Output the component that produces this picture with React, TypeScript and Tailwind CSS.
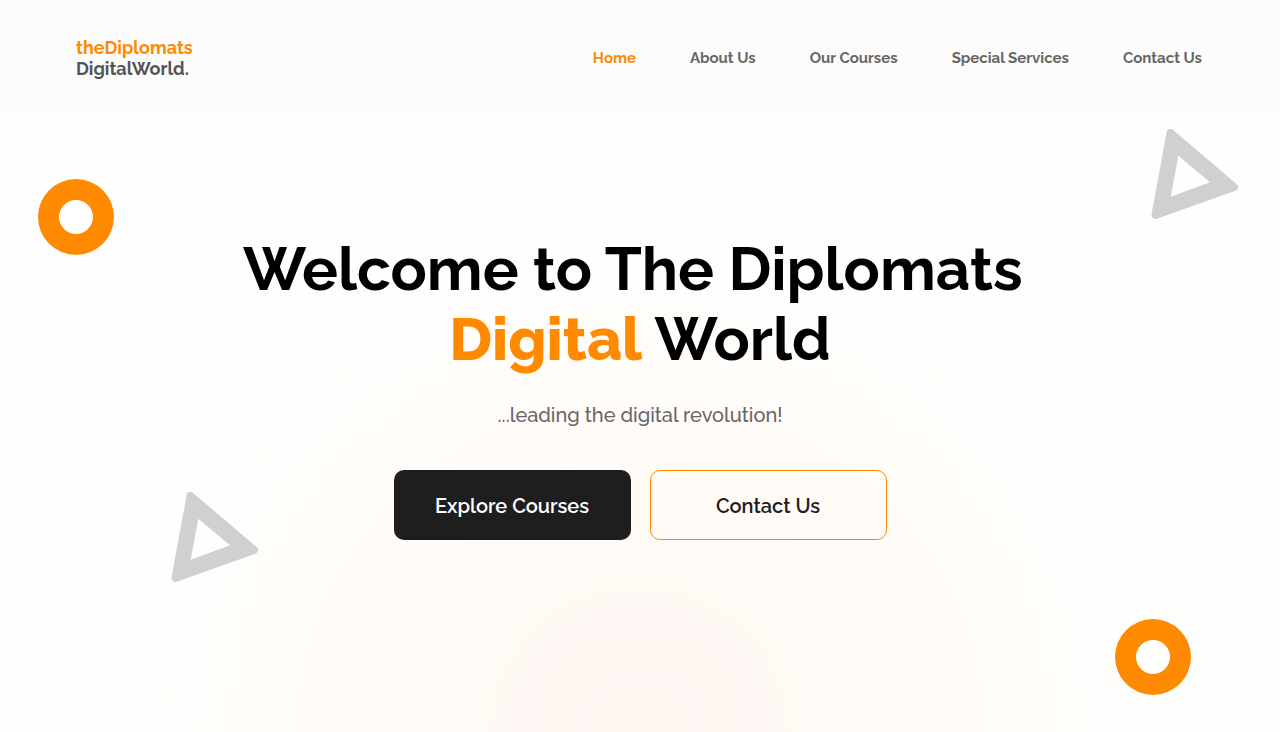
const navItems = [
  { label: "Home", href: "#home" },
  { label: "About Us", href: "#about" },
  { label: "Our Courses", href: "#courses" },
  { label: "Special Services", href: "#services" },
  { label: "Contact Us", href: "#contact" },
];

function Triangle({ className }: { className: string }) {
  return (
    <svg aria-hidden="true" width="90" height="92" viewBox="0 0 90 92" className={className}>
      <path
        d="M20.5 5 84 59 5.5 87ZM28.3 27.7 20.7 68.7 60 54.3Z"
        fill="#d0d0d0"
        fillRule="evenodd"
      />
      <path d="M20.5 5 84 59 5.5 87Z" fill="none" stroke="#d0d0d0" strokeWidth="8" strokeLinejoin="round" />
    </svg>
  );
}

function Ring({ className }: { className: string }) {
  return (
    <svg aria-hidden="true" width="76" height="76" viewBox="0 0 76 76" className={className}>
      <circle cx="38" cy="38" r="38" fill="#ff8a00" />
      <circle cx="38" cy="38" r="17" fill="#fff" />
    </svg>
  );
}

export default function App() {
  return (
    <div className="flex min-h-screen flex-col bg-white font-['Raleway','Lato',sans-serif]">
      <header className="flex h-28 items-center justify-between bg-[#fcfcfc] pr-[78px] pl-[76px]">
        <a href="#home" className="flex flex-col pt-1 text-[18px] leading-[21px] font-bold">
          <span className="text-[#ff8a00]">theDiplomats</span>
          <span className="text-[#555]">DigitalWorld.</span>
        </a>
        <nav aria-label="Main" className="flex gap-[54px] pt-1 text-[15px] leading-6 font-bold text-[#666]">
          {navItems.map((item, i) => (
            <a key={item.label} href={item.href} className={i === 0 ? "text-[#ff8a00]" : ""}>
              {item.label}
            </a>
          ))}
        </nav>
      </header>

      <main className="relative flex flex-1 flex-col items-center overflow-hidden bg-[radial-gradient(ellipse_640px_620px_at_50%_100%,#fff7f2_0%,#fffbf7_45%,#fffefc_75%,#fefefe_100%)] pt-[122px] pb-20 text-center">
        <Ring className="absolute top-[67px] left-[38px]" />
        <Triangle className="absolute top-4 right-10" />
        <Triangle className="absolute top-[379px] left-[170px]" />
        <Ring className="absolute right-[89px] bottom-[37px]" />

        <h1 className="text-[60px] leading-[70px] font-bold text-black">
          Welcome to The Diplomats{"\u00a0"}
          <br />
          <span className="font-extrabold text-[#ff8a00]">Digital</span> World
        </h1>
        <p className="mt-[26px] text-[20px] leading-[30px] font-medium text-[#666]">
          ...leading the digital revolution!
        </p>
        <div className="mt-10 flex gap-[19px] text-[20px] font-semibold">
          <button type="button" className="h-[70px] w-[237px] rounded-[10px] bg-[#1e1e1e] pt-0.5 text-white">
            Explore Courses
          </button>
          <button
            type="button"
            className="h-[70px] w-[237px] rounded-[10px] border border-[#ff8a00] pt-0.5 text-[#1e1e1e]"
          >
            Contact Us
          </button>
        </div>
      </main>
    </div>
  );
}
